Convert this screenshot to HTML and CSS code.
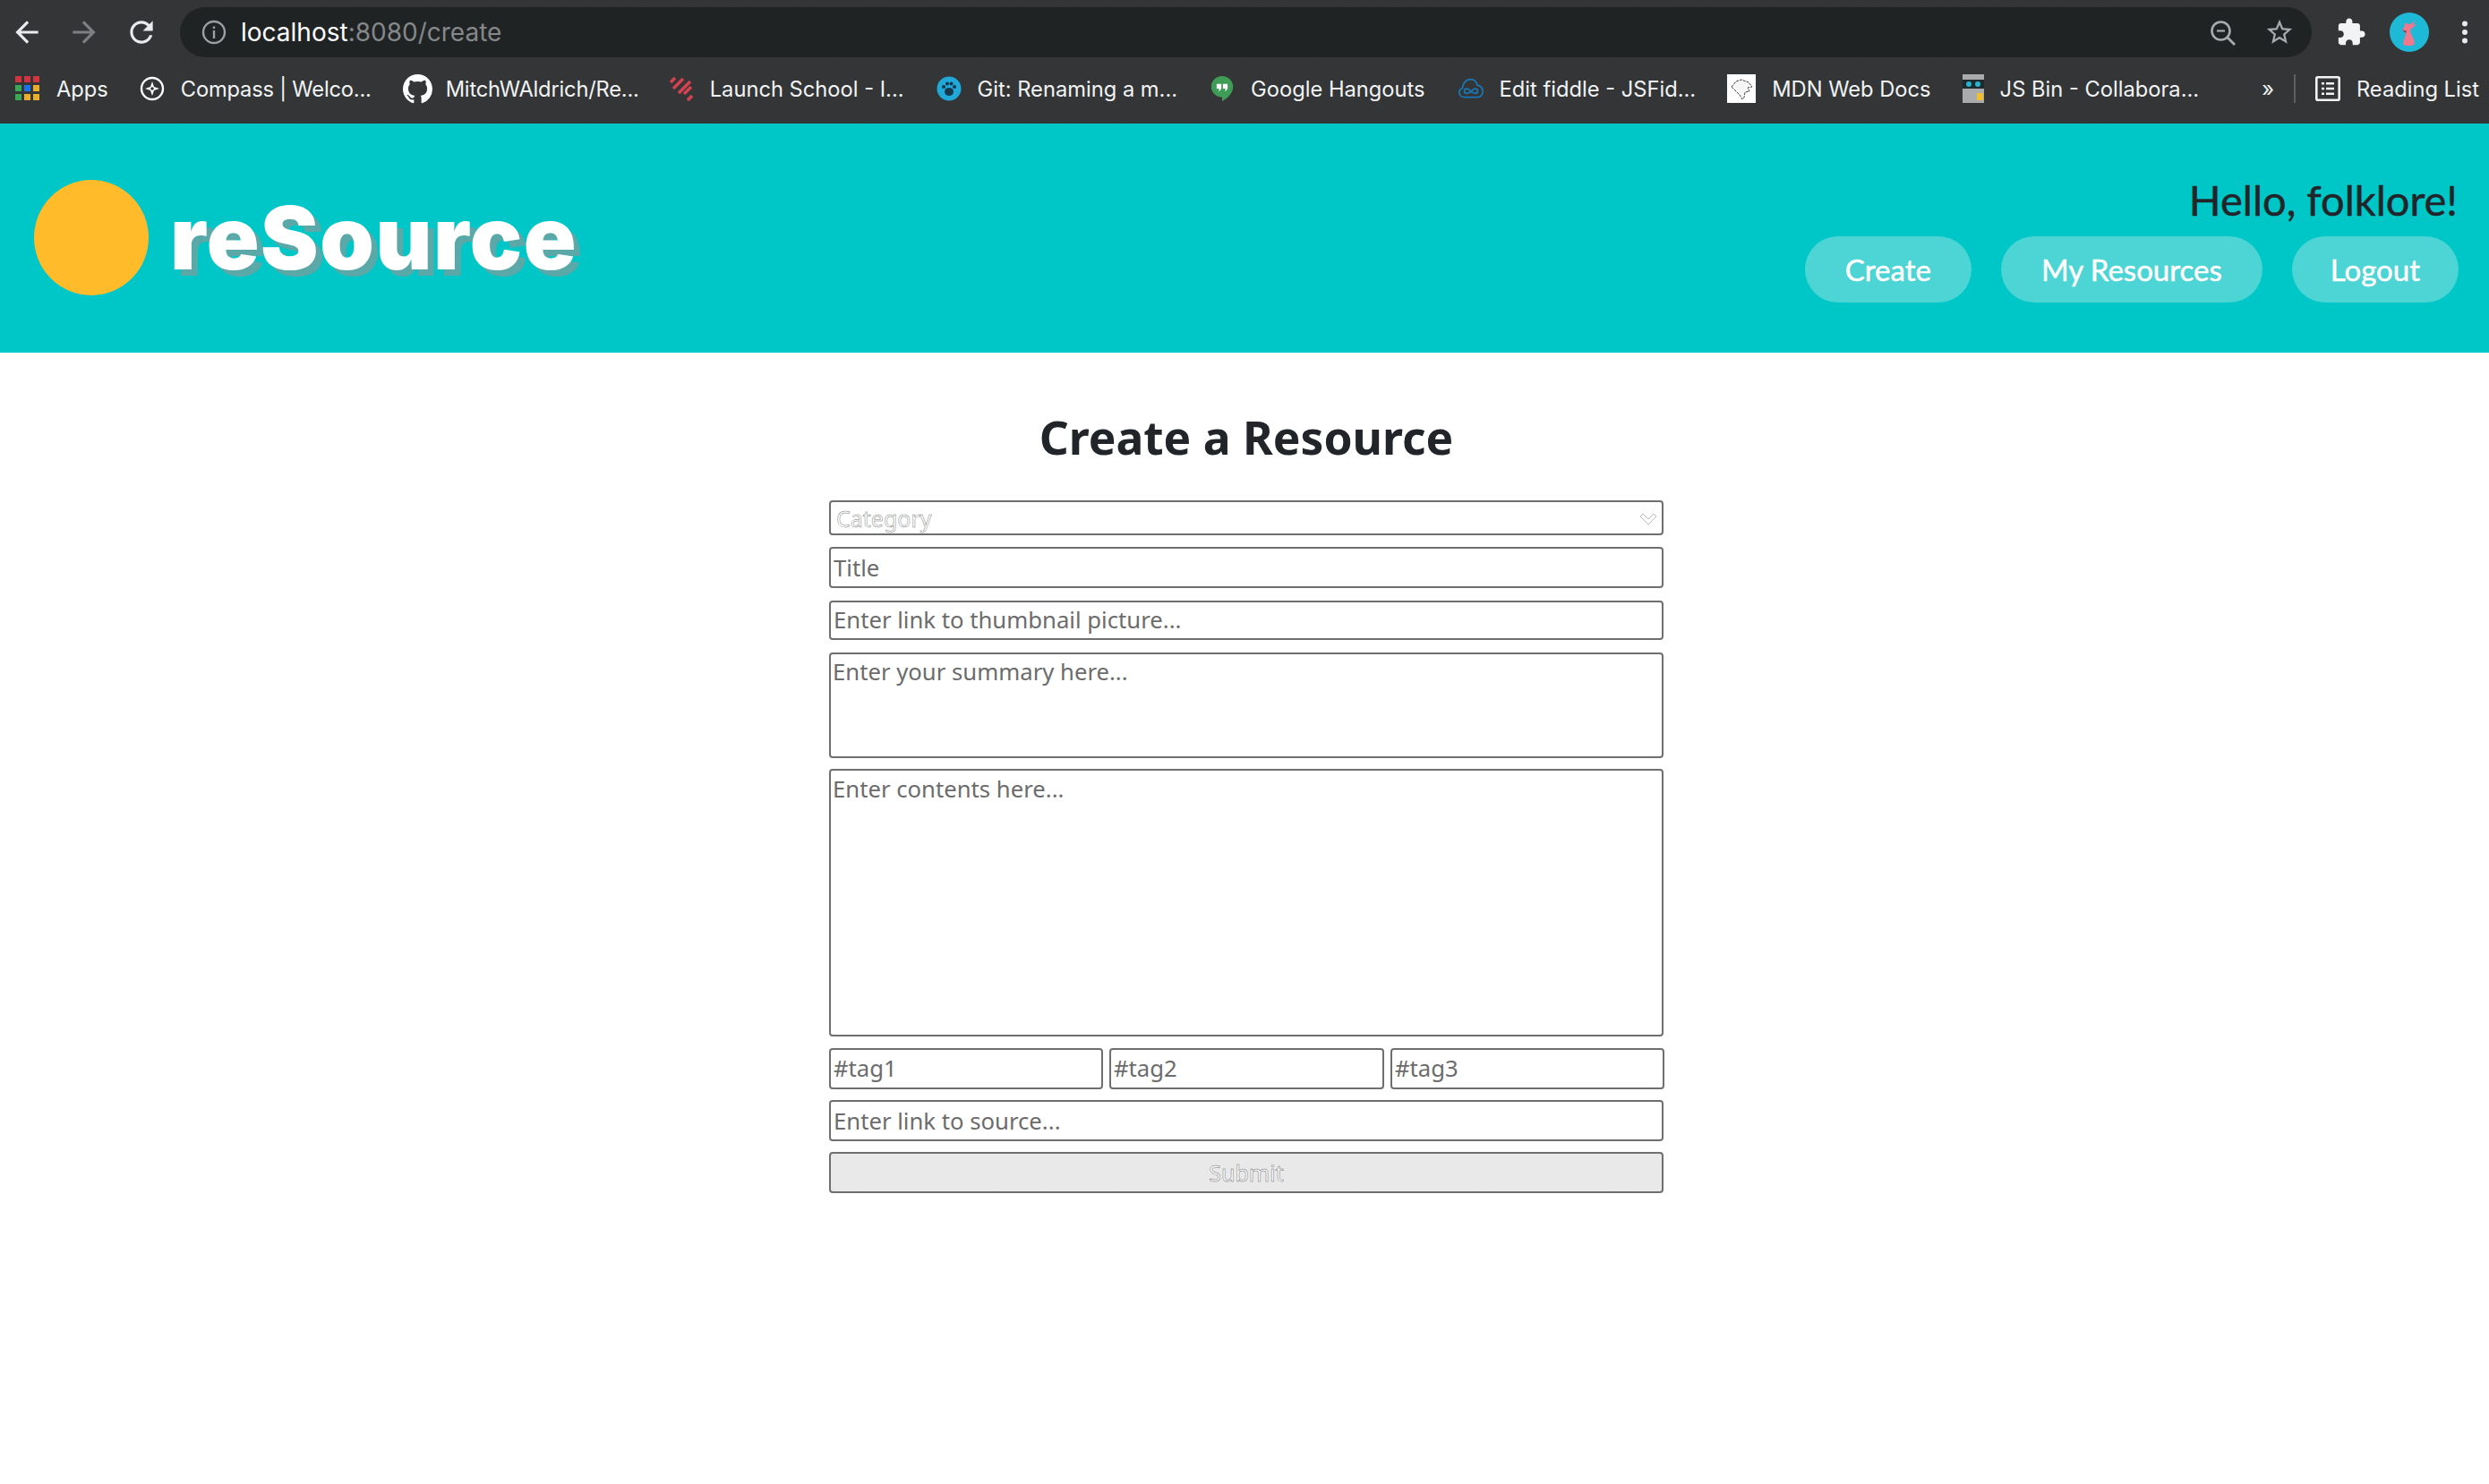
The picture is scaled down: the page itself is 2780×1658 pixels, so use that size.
FILE: index.html
```html
<!DOCTYPE html>
<html>

<head>
    <title>reSource</title>
    <link rel="stylesheet" href="styles.css">
</head>

<body>
    <!-- browser toolbar -->
    <div class="browser">
        <div class="toolbar">
            <svg class="tool-icon" viewBox="0 0 24 24"><path fill="#e8eaed" d="M20 11H7.83l5.59-5.59L12 4l-8 8 8 8 1.41-1.41L7.83 13H20v-2z"/></svg>
            <svg class="tool-icon" viewBox="0 0 24 24"><path fill="#7d8083" d="M12 4l-1.41 1.41L16.17 11H4v2h12.17l-5.58 5.59L12 20l8-8z"/></svg>
            <svg class="tool-icon" viewBox="0 0 24 24"><path fill="#e8eaed" d="M17.65 6.35C16.2 4.9 14.21 4 12 4c-4.42 0-7.99 3.58-7.99 8s3.57 8 7.99 8c3.73 0 6.84-2.55 7.73-6h-2.08c-.82 2.33-3.04 4-5.65 4-3.31 0-6-2.69-6-6s2.69-6 6-6c1.66 0 3.14.69 4.22 1.78L13 11h7V4l-2.35 2.35z"/></svg>
            <div class="omnibox">
                <svg class="info-icon" viewBox="0 0 28 28">
                    <circle cx="14" cy="14" r="12" fill="none" stroke="#9aa0a6" stroke-width="2.4"/>
                    <rect x="12.8" y="12" width="2.4" height="9" fill="#9aa0a6"/>
                    <rect x="12.8" y="7.5" width="2.4" height="2.6" fill="#9aa0a6"/>
                </svg>
                <span class="url"><span class="url-host">localhost</span>:8080/create</span>
                <svg class="omni-icon" viewBox="0 0 30 30">
                    <circle cx="12.5" cy="12.5" r="10" fill="none" stroke="#a8abae" stroke-width="2.6"/>
                    <rect x="8" y="11.4" width="9" height="2.2" fill="#a8abae"/>
                    <path d="M20 20l8 8" stroke="#a8abae" stroke-width="2.8"/>
                </svg>
                <svg class="omni-icon star" viewBox="0 0 24 24"><path fill="#a8abae" d="M22 9.24l-7.19-.62L12 2 9.19 8.63 2 9.24l5.46 4.73L5.82 21 12 17.27 18.18 21l-1.63-7.03L22 9.24zM12 15.4l-3.76 2.27 1-4.28-3.32-2.88 4.38-.38L12 6.1l1.71 4.04 4.38.38-3.32 2.88 1 4.28L12 15.4z"/></svg>
            </div>
            <svg class="puzzle" viewBox="0 0 24 24"><path fill="#f1f3f4" d="M20.5 11H19V7c0-1.1-.9-2-2-2h-4V3.5C13 2.12 11.88 1 10.5 1S8 2.12 8 3.5V5H4c-1.1 0-1.99.9-1.99 2v3.8H3.5c1.49 0 2.7 1.21 2.7 2.7s-1.21 2.7-2.7 2.7H2V20c0 1.1.9 2 2 2h3.8v-1.5c0-1.49 1.21-2.7 2.7-2.7 1.49 0 2.7 1.21 2.7 2.7V22H17c1.1 0 2-.9 2-2v-4h1.5c1.38 0 2.5-1.12 2.5-2.5S21.88 11 20.5 11z"/></svg>
            <svg class="avatar" viewBox="0 0 44 44">
                <circle cx="22" cy="22" r="22" fill="#1fb9d8"/>
                <path fill="#f0788c" d="M17 12l6 1 6-4-3 5 4-1-4 4-3 2 1 5 3 6 1 5-3 2h-8l-2-2 1-5 2-5-1-4-3-2 2-2z"/>
                <path fill="#7d3b47" d="M14 19l5 2-1 2z"/>
            </svg>
            <svg class="kebab" viewBox="0 0 8 26">
                <circle cx="4" cy="3.5" r="3" fill="#e8eaed"/>
                <circle cx="4" cy="13" r="3" fill="#e8eaed"/>
                <circle cx="4" cy="22.5" r="3" fill="#e8eaed"/>
            </svg>
        </div>

        <div class="bookmarks">
            <a class="bookmark mark-apps">
                <svg class="mark-icon" viewBox="0 0 28 28">
                    <rect x="0" y="0" width="7" height="7" fill="#d2343f"/><rect x="10" y="0" width="7" height="7" fill="#d2343f"/><rect x="20" y="0" width="7" height="7" fill="#d2343f"/>
                    <rect x="0" y="10" width="7" height="7" fill="#3aa757"/><rect x="10" y="10" width="7" height="7" fill="#1a73e8"/><rect x="20" y="10" width="7" height="7" fill="#e8ae2c"/>
                    <rect x="0" y="20" width="7" height="7" fill="#3aa757"/><rect x="10" y="20" width="7" height="7" fill="#e8ae2c"/><rect x="20" y="20" width="7" height="7" fill="#e8ae2c"/>
                </svg>
                Apps
            </a>
            <a class="bookmark mark-compass">
                <svg class="mark-icon" viewBox="0 0 28 28">
                    <circle cx="14" cy="14" r="12" fill="none" stroke="#fff" stroke-width="2.4"/>
                    <path fill="#fff" d="M14 6l2 6 6 2-6 2-2 6-2-6-6-2 6-2z"/>
                    <circle cx="14" cy="14" r="1.8" fill="#333"/>
                </svg>
                Compass | Welco...
            </a>
            <a class="bookmark mark-github">
                <svg class="mark-icon github" viewBox="0 0 16 16"><path fill="#fff" d="M8 0C3.58 0 0 3.58 0 8c0 3.54 2.29 6.53 5.47 7.59.4.07.55-.17.55-.38 0-.19-.01-.82-.01-1.49-2.01.37-2.53-.49-2.69-.94-.09-.23-.48-.94-.82-1.13-.28-.15-.68-.52-.01-.53.63-.01 1.08.58 1.23.82.72 1.21 1.87.87 2.33.66.07-.52.28-.87.51-1.07-1.78-.2-3.64-.89-3.64-3.95 0-.87.31-1.59.82-2.15-.08-.2-.36-1.02.08-2.12 0 0 .67-.21 2.2.82.64-.18 1.32-.27 2-.27.68 0 1.36.09 2 .27 1.53-1.04 2.2-.82 2.2-.82.44 1.1.16 1.92.08 2.12.51.56.82 1.27.82 2.15 0 3.07-1.87 3.75-3.65 3.95.29.25.54.73.54 1.48 0 1.07-.01 1.93-.01 2.2 0 .21.15.46.55.38A8.013 8.013 0 0016 8c0-4.42-3.58-8-8-8z"/></svg>
                MitchWAldrich/Re...
            </a>
            <a class="bookmark mark-launch">
                <svg class="mark-icon" viewBox="0 0 28 28">
                    <path d="M2 7l5-5M5 14L16 3M11 19L24 6M17 20l8-8M21 27l5-5" stroke="#d2434f" stroke-width="3.6" fill="none"/>
                </svg>
                Launch School - I...
            </a>
            <a class="bookmark mark-git">
                <svg class="mark-icon" viewBox="0 0 28 28">
                    <circle cx="14" cy="14" r="13.5" fill="#1fa8d8"/>
                    <ellipse cx="14" cy="17.5" rx="5" ry="4.5" fill="#16384a"/>
                    <circle cx="8" cy="12" r="2" fill="#16384a"/><circle cx="12" cy="8.5" r="2" fill="#16384a"/><circle cx="16.500" cy="8.5" r="2" fill="#16384a"/><circle cx="20" cy="12" r="2" fill="#16384a"/>
                </svg>
                Git: Renaming a m...
            </a>
            <a class="bookmark mark-hangouts">
                <svg class="mark-icon" viewBox="0 0 28 32">
                    <path fill="#3f9c56" d="M14 0C6.300 0 0 6 0 13.500S6.300 27 14 27v5c7-3.500 14-10 14-18.500C28 6 21.700 0 14 0z"/>
                    <path fill="#fff" d="M7 10h6v6l-3 4v-4H7zM15 10h6v6l-3 4v-4h-3z"/>
                </svg>
                Google Hangouts
            </a>
            <a class="bookmark mark-fiddle">
                <svg class="mark-icon" viewBox="0 0 32 28">
                    <path fill="none" stroke="#1a78b8" stroke-width="2" d="M8 25c-4 0-7-2.500-7-6 0-3 2-5 4-5.500C5.500 7 10 2 15 2c4.500 0 8 3 9 7.500 4 .5 7 4 7 8 0 4.500-3 7.500-7 7.500z"/>
                    <path fill="none" stroke="#1a78b8" stroke-width="2" d="M16 18c-2-3-3.500-4-5.500-4s-3 1.500-3 3 1 3 3 3 3.500-1 5.500-2zm0 0c2-3 3.500-4 5.500-4s3 1.500 3 3-1 3-3 3-3.500-1-5.500-2z"/>
                </svg>
                Edit fiddle - JSFid...
            </a>
            <a class="bookmark mark-mdn">
                <svg class="mark-icon square" viewBox="0 0 32 32">
                    <rect width="32" height="32" fill="#fff"/>
                    <path fill="#f6f6f6" stroke="#444" stroke-width="1" stroke-dasharray="3 1" d="M5 14l5-6 6-2 8 3 4 5-5 1 2 4-5 1-1 6-2 2-3-5-6-6z"/>
                </svg>
                MDN Web Docs
            </a>
            <a class="bookmark mark-bin">
                <svg class="mark-icon bin" viewBox="0 0 24 32">
                    <rect width="24" height="32" fill="#a9abac"/>
                    <rect y="6" width="24" height="10" fill="#1f2a2f"/>
                    <circle cx="7" cy="11" r="3" fill="#25b5cf"/><circle cx="17" cy="11" r="3" fill="#25b5cf"/>
                    <rect x="16" y="21" width="7" height="8" fill="#efc12f"/>
                </svg>
                JS Bin - Collabora...
            </a>
            <span class="more">»</span>
            <span class="divider"></span>
            <a class="bookmark mark-reading">
                <svg class="mark-icon" viewBox="0 0 28 28">
                    <rect x="1.300" y="1.300" width="25.400" height="25.400" rx="1.500" fill="none" stroke="#f1f3f4" stroke-width="2.600"/>
                    <path fill="#f1f3f4" d="M7 7h3v2.500H7zM12 7h9v2.500h-9zM7 12.700h3v2.500H7zM12 12.700h9v2.500h-9zM7 18.500h3V21H7zM12 18.500h9V21h-9z"/>
                </svg>
                Reading List
            </a>
        </div>
    </div>

    <!-- site nav -->
    <header class="site-header">
        <div class="brand">
            <span class="brand-dot"></span>
            <span class="brand-name">reSource</span>
        </div>
        <div class="user-area">
            <div class="greeting">Hello, folklore!</div>
            <nav class="nav-buttons">
                <a class="nav-btn">Create</a>
                <a class="nav-btn">My Resources</a>
                <a class="nav-btn nav-logout">Logout</a>
            </nav>
        </div>
    </header>

    <main class="create-page">
        <h1 class="page-title">Create a Resource</h1>
        <form class="resource-form">
            <div class="select-wrap">
                <select class="field field-category" disabled>
                    <option>Category</option>
                </select>
                <svg class="select-arrow" viewBox="0 0 20 14"><path d="M1 4l3-3 6 6 6-6 3 3-9 9z" fill="#fff" stroke="#8a8a8a" stroke-width=".6"/></svg>
            </div>
            <input class="field field-title" type="text" placeholder="Title">
            <input class="field field-thumb" type="text" placeholder="Enter link to thumbnail picture...">
            <textarea class="field field-summary" placeholder="Enter your summary here..."></textarea>
            <textarea class="field field-contents" placeholder="Enter contents here..."></textarea>
            <div class="tag-row">
                <input class="field field-tag" type="text" placeholder="#tag1">
                <input class="field field-tag" type="text" placeholder="#tag2">
                <input class="field field-tag" type="text" placeholder="#tag3">
            </div>
            <input class="field field-source" type="text" placeholder="Enter link to source...">
            <button class="submit-btn" type="button" disabled>Submit</button>
        </form>
    </main>
</body>

</html>
```

FILE: styles.css
```css
* {
    box-sizing: border-box;
}

body {
    margin: 0;
    background: #fff;
    font-family: "Noto Sans", sans-serif;
    color: #212529;
}

/* browser chrome */
.browser {
    height: 138px;
    background: repeating-conic-gradient(#2e3031 0 25%, #383a3b 0 50%) 0 0 / 2px 2px;
    font-family: Inter, Roboto, sans-serif;
    color: #f1f3f4;
}

.toolbar {
    display: flex;
    align-items: center;
    height: 64px;
    padding: 8px 0 0 11px;
}

.tool-icon {
    width: 38px;
    height: 38px;
    margin-right: 26px;
    flex: none;
}

.omnibox {
    display: flex;
    align-items: center;
    width: 2381px;
    height: 56px;
    margin-left: -2px;
    padding: 0 19px 0 24px;
    border-radius: 28px;
    background: #202324;
}

.info-icon {
    width: 28px;
    height: 28px;
    margin-right: 16px;
}

.url {
    font-size: 28px;
    color: #85888a;
    margin-right: auto;
}

.url-host {
    color: #fff;
}

.omni-icon {
    width: 30px;
    height: 30px;
    margin-bottom: -2px;
}

.omni-icon.star {
    width: 34px;
    height: 34px;
    margin-left: 31px;
    margin-bottom: 0;
}

.puzzle {
    width: 34px;
    height: 34px;
    margin-left: 27px;
}

.avatar {
    width: 44px;
    height: 44px;
    margin-left: 26px;
}

.kebab {
    width: 8px;
    height: 26px;
    margin-left: 36px;
}

.bookmarks {
    display: flex;
    align-items: center;
    height: 74px;
    padding: 0 11px 4px 17px;
    font-size: 23.7px;
    white-space: nowrap;
}

.bookmark {
    display: flex;
    align-items: center;
    gap: 18px;
    margin-right: 35px;
}

.mark-icon {
    width: 28px;
    height: 28px;
    flex: none;
}

.mark-icon.github {
    width: 33px;
    height: 33px;
}

.mark-compass {
    letter-spacing: -.2px;
}

.mark-github {
    gap: 15px;
    margin-right: 33px;
    letter-spacing: -.2px;
}

.mark-launch,
.mark-git {
    margin-right: 36px;
}

.mark-hangouts {
    margin-right: 37px;
}

.mark-icon.square {
    width: 32px;
    height: 32px;
}

.mark-icon.bin {
    width: 24px;
    height: 32px;
}

.more {
    margin-left: auto;
    margin-right: 22px;
}

.divider {
    width: 2px;
    height: 32px;
    margin-right: 22px;
    background: #5c5e60;
}

.mark-reading {
    margin-right: 0;
}

/* site header */
.site-header {
    display: flex;
    justify-content: space-between;
    align-items: flex-start;
    height: 256px;
    padding: 63px 34px 0 38px;
    background: #00c7c7;
}

.brand {
    display: flex;
    align-items: center;
    gap: 24px;
}

.brand-dot {
    width: 128px;
    height: 129px;
    border-radius: 50%;
    background: #ffbb29;
}

.brand-name {
    font-family: Inter, sans-serif;
    font-weight: 900;
    font-size: 97px;
    line-height: 1;
    letter-spacing: 1.600px;
    color: #fff;
    text-shadow: 7px 7px 0 #5aa8a8;
}

.user-area {
    display: flex;
    flex-direction: column;
    align-items: flex-end;
    margin-top: -11px;
}

.greeting {
    margin-right: 1px;
    font-family: Lato, sans-serif;
    font-size: 47px;
    line-height: 66px;
    color: #212529;
    -webkit-text-stroke: .5px #212529;
}

.nav-buttons {
    display: flex;
    gap: 33px;
    margin-top: 8px;
}

.nav-btn {
    display: flex;
    align-items: center;
    justify-content: center;
    height: 74px;
    padding: 0 45px;
    border-radius: 37px;
    background: #4dd4d4;
    font-family: Lato, sans-serif;
    font-size: 33px;
    color: #fff;
    -webkit-text-stroke: .5px #fff;
}

.nav-logout {
    padding: 0 43px;
}

/* create form */
.create-page {
    padding: 59px 0 0 4px;
}

.page-title {
    margin: 0 0 36px;
    font-size: 51.5px;
    line-height: 70px;
    font-weight: 700;
    text-align: center;
}

.resource-form {
    display: flex;
    flex-direction: column;
    gap: 13px;
    width: 932px;
    margin: 0 auto;
}

.field {
    display: block;
    width: 100%;
    height: 46px;
    padding: 0 3px;
    border: 2px solid #6f6f6f;
    border-radius: 4px;
    background: #fff;
    font-family: "Noto Sans", sans-serif;
    font-size: 25.7px;
    color: #212529;
    resize: none;
    outline: none;
}

.field::placeholder {
    color: #6c6c6c;
    opacity: 1;
}

textarea.field {
    padding: 2px 2px;
    line-height: 36px;
}

.select-wrap {
    position: relative;
}

.field-category {
    height: 39px;
    padding: 0 6px;
    appearance: none;
    font-size: 25px;
    color: #fff;
    -webkit-text-stroke: .5px #808080;
    opacity: 1;
}

.select-arrow {
    position: absolute;
    top: 14px;
    right: 7px;
    width: 20px;
    height: 14px;
}

.field-thumb {
    height: 44px;
    margin-top: 1px;
    padding-bottom: 2px;
}

.field-tag {
    padding-bottom: 2px;
}

.field-summary {
    height: 118px;
    margin-top: 1px;
}

textarea.field-contents {
    height: 299px;
    margin-top: -1px;
    padding-top: 3px;
}

.tag-row {
    display: grid;
    grid-template-columns: 306px 307px 306px;
    gap: 7px;
}

.field-source,
.submit-btn {
    margin-top: -1px;
}

.submit-btn {
    height: 46px;
    border: 2px solid #6f6f6f;
    border-radius: 4px;
    background: repeating-conic-gradient(#e6e6e6 0 25%, #ececec 0 50%) 0 0 / 2px 2px;
    font-family: "Noto Sans", sans-serif;
    font-size: 25px;
    color: #fff;
    -webkit-text-stroke: .5px #707070;
}
```
